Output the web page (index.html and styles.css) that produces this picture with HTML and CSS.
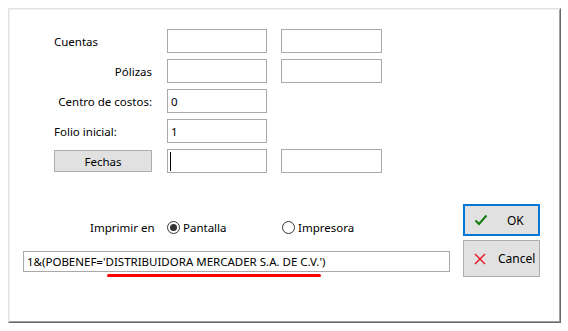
FILE: index.html
```html
<!DOCTYPE html>
<html lang="es">
<head>
<meta charset="utf-8">
<title>Impresión</title>
<link rel="stylesheet" href="styles.css">
</head>
<body>
<div class="dialog">
  <div class="inner">
    <div class="fields">
      <label class="lbl left">Cuentas</label>
      <div class="inp"></div>
      <div class="inp"></div>

      <label class="lbl right">Pólizas</label>
      <div class="inp"></div>
      <div class="inp"></div>

      <label class="lbl right">Centro de costos:</label>
      <div class="inp">0</div>
      <div></div>

      <label class="lbl left">Folio inicial:</label>
      <div class="inp">1</div>
      <div></div>

      <div class="btncell"><button class="fechas">Fechas</button></div>
      <div class="inp focus"><span class="caret"></span></div>
      <div class="inp"></div>
    </div>

    <div class="bottom">
      <div class="leftcol">
        <div class="printrow">
          <span class="plabel">Imprimir en</span>
          <span class="radio on"></span>
          <span class="rtext pant">Pantalla</span>
          <span class="radio"></span>
          <span class="rtext">Impresora</span>
        </div>
        <div class="longinp">1&amp;(POBENEF='DISTRIBUIDORA MERCADER S.A. DE C.V.')</div>
        <div class="redline"></div>
      </div>
      <div class="btncol">
        <button class="dbtn ok">
          <svg class="ico" width="14" height="12" viewBox="0 0 14 12"><path d="M1.5 6.5 L5 10 L12.5 1.5" fill="none" stroke="#107c10" stroke-width="2"/></svg>
          <span>OK</span>
        </button>
        <button class="dbtn cancel">
          <svg class="ico" width="12" height="12" viewBox="0 0 12 12"><path d="M1 1 L11 11 M11 1 L1 11" fill="none" stroke="#e81123" stroke-width="1.4"/></svg>
          <span>Cancel</span>
        </button>
      </div>
    </div>
  </div>
</div>
</body>
</html>
```
FILE: styles.css
```css
html, body {
  margin: 0;
  padding: 0;
  background: #ffffff;
}
body {
  font-family: "Noto Sans", "Open Sans", sans-serif;
  font-size: 11.5px;
  color: #000;
}
.dialog {
  margin: 8px 0 0 8px;
  width: 553px;
  height: 315px;
  box-sizing: border-box;
  border-top: 1px solid #e3e3e3;
  border-left: 1px solid #e3e3e3;
  border-right: 1px solid #696969;
  border-bottom: 1px solid #696969;
}
.inner {
  height: 100%;
  box-sizing: border-box;
  border-top: 1px solid #f0f0f0;
  border-left: 1px solid #f0f0f0;
  border-right: 1px solid #a0a0a0;
  border-bottom: 1px solid #a0a0a0;
  padding: 19px 0 0 44px;
}
.fields {
  display: grid;
  grid-template-columns: 98px 100px 100px;
  grid-auto-rows: 24px;
  column-gap: 15px;
  row-gap: 6px;
}
.fields > :nth-child(3n) { margin-left: -1px; }
.lbl {
  display: flex;
  align-items: center;
  white-space: nowrap;
}
.lbl.right { justify-content: flex-end; }
.inp {
  box-sizing: border-box;
  border: 1px solid #a9a9a9;
  background: #fff;
  padding: 0 3px;
  display: flex;
  align-items: center;
  position: relative;
}
.caret {
  display: block;
  width: 1px;
  height: 19px;
  background: #000;
  margin-left: -1px;
}
.btncell {
  display: flex;
  align-items: center;
}
.fechas {
  width: 98px;
  height: 22px;
  box-sizing: border-box;
  border: 1px solid #adadad;
  background: #e1e1e1;
  font: inherit;
  color: #000;
  padding: 0;
}
.bottom {
  display: flex;
  margin: 31px 0 0 -31px;
}
.leftcol {
  width: 427px;
  padding-top: 16px;
}
.printrow {
  display: flex;
  align-items: center;
  height: 14px;
}
.plabel {
  margin-left: 67px;
  width: 77px;
}
.radio {
  width: 13px;
  height: 13px;
  box-sizing: border-box;
  border: 1px solid #333;
  border-radius: 50%;
  display: flex;
  align-items: center;
  justify-content: center;
  background: #fff;
}
.radio.on::after {
  content: "";
  width: 7px;
  height: 7px;
  border-radius: 50%;
  background: #333;
}
.rtext { margin-left: 3px; }
.rtext.pant { width: 99px; }
.longinp {
  margin-top: 17px;
  height: 21px;
  box-sizing: border-box;
  border: 1px solid #a9a9a9;
  padding: 0 3px;
  display: flex;
  align-items: center;
  white-space: nowrap;
}
.redline {
  margin: 2px 0 0 84px;
  width: 214px;
  height: 3px;
  border-radius: 2px;
  background: #ff0000;
}
.btncol {
  margin-left: 13px;
  display: flex;
  flex-direction: column;
  width: 77px;
}
.dbtn {
  box-sizing: border-box;
  background: #e1e1e1;
  font: inherit;
  font-size: 12px;
  color: #000;
  display: flex;
  align-items: center;
  padding: 0;
}
.dbtn.ok {
  height: 32px;
  border: 2px solid #0078d7;
  padding-left: 9px;
}
.dbtn.ok .ico { margin-right: 19px; }
.dbtn.cancel {
  margin-top: 4px;
  height: 37px;
  border: 1px solid #adadad;
  padding-left: 10px;
}
.dbtn.cancel .ico { margin-right: 12px; }
```
